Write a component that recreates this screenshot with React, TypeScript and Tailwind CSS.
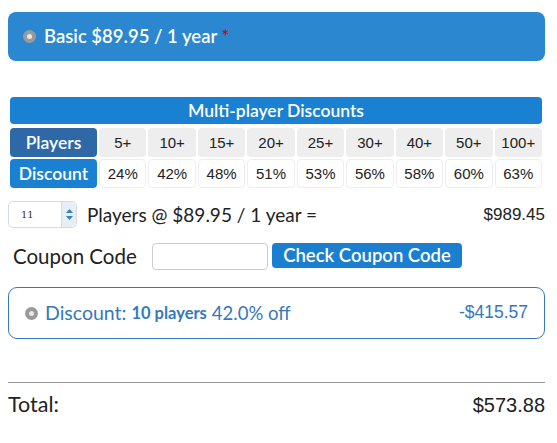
import React from "react";

const Q = { fontFamily: "'Lato', 'Noto Sans', sans-serif" };
const H = { fontFamily: "'Liberation Sans', Arial, sans-serif" };

function Radio() {
  return (
    <span className="inline-flex h-[13px] w-[13px] shrink-0 items-center justify-center rounded-full bg-[#9a9a9a]">
      <span className="h-[5px] w-[5px] rounded-full bg-[#e8e8e8]" />
    </span>
  );
}

export default function App() {
  const players = ["5+", "10+", "15+", "20+", "25+", "30+", "40+", "50+", "100+"];
  const discounts = ["24%", "42%", "48%", "51%", "53%", "56%", "58%", "60%", "63%"];
  return (
    <div className="w-[557px] h-[443px] bg-white text-[#222] leading-none" style={Q}>
      <div className="pt-[12px] px-[8px] pr-[12px]">
        <div className="flex h-[49px] items-center gap-[8px] rounded-[8px] bg-[#2a87d0] pl-[15px] text-[18.5px] font-semibold text-white">
          <Radio />
          <span>
            Basic $89.95 / 1 year <span className="text-[#d0021b]">*</span>
          </span>
        </div>
      </div>

      <div className="mt-[36px] pl-[10px] pr-[15px]">
        <div className="flex h-[27px] items-center justify-center rounded-[4px] bg-[#1a80d2] text-[17.5px] font-semibold text-white">
          Multi-player Discounts
        </div>
        <div className="mt-[4px] grid grid-cols-[87px_repeat(9,1fr)] gap-x-[2px] gap-y-[2px]">
          <div className="flex h-[29px] items-center justify-center rounded-[4px] bg-[#2f68a6] text-[17.5px] font-semibold text-white">
            Players
          </div>
          {players.map((p) => (
            <div key={p} className="flex h-[29px] items-center justify-center rounded-[4px] bg-[#eeeeee] text-[15px] text-[#222]" style={H}>
              {p}
            </div>
          ))}
          <div className="flex h-[29px] items-center justify-center rounded-[4px] bg-[#1a80d2] text-[17.5px] font-semibold text-white">
            Discount
          </div>
          {discounts.map((d) => (
            <div key={d} className="flex h-[29px] items-center justify-center rounded-[4px] border border-[#eeeeee] bg-white text-[15px] text-[#222]" style={H}>
              {d}
            </div>
          ))}
        </div>
      </div>

      <div className="mt-[13px] flex h-[27px] items-center pl-[8px] pr-[12px]">
        <div className="flex h-[27px] w-[69px] items-stretch rounded-[5px] border border-[#d6dbe0] bg-white">
          <div className="flex flex-1 items-center pl-[12px] text-[10px] text-[#333]" style={{ fontFamily: "'DejaVu Serif', serif" }}>
            11
          </div>
          <div className="flex w-[15px] flex-col items-center justify-center gap-[3px] rounded-r-[5px] border-l border-[#d6dbe0] bg-[#e6eef6]">
            <svg width="7" height="4" viewBox="0 0 7 4"><path d="M0 4 L3.5 0 L7 4Z" fill="#3a7ec2" /></svg>
            <svg width="7" height="4" viewBox="0 0 7 4"><path d="M0 0 L3.5 4 L7 0Z" fill="#3a7ec2" /></svg>
          </div>
        </div>
        <span className="ml-[10px] text-[19px]">Players @ $89.95 / 1 year =</span>
        <span className="ml-auto text-[17px]" style={H}>$989.45</span>
      </div>

      <div className="mt-[15px] flex h-[27px] items-center pl-[13px]">
        <span className="w-[126px] whitespace-nowrap text-[20.5px]">Coupon Code</span>
        <input className="ml-[13px] h-[27px] w-[116px] rounded-[4px] border border-[#cccccc] bg-white" />
        <button className="ml-[4px] h-[25px] w-[190px] self-start rounded-[4px] bg-[#1a7fd0] text-[18.5px] font-semibold text-white">
          Check Coupon Code
        </button>
      </div>

      <div className="mt-[17px] pl-[8px] pr-[12px]">
        <div className="flex h-[52px] items-center rounded-[9px] border border-[#3478bd] pl-[16px] pr-[16px] text-[#3478bd]">
          <Radio />
          <span className="ml-[7px] text-[19.5px]">Discount:</span>
          <span className="ml-[5px] text-[16.5px] font-bold">10 players</span>
          <span className="ml-[5px] text-[18.5px]">42.0% off</span>
          <span className="ml-auto text-[17.5px]" style={H}>-$415.57</span>
        </div>
      </div>

      <div className="mt-[43px] pl-[8px] pr-[12px]">
        <div className="h-px bg-[#999]" />
        <div className="mt-[8px] flex h-[28px] items-center">
          <span className="text-[21.5px]">Total:</span>
          <span className="ml-auto text-[20px]" style={H}>$573.88</span>
        </div>
      </div>
    </div>
  );
}
